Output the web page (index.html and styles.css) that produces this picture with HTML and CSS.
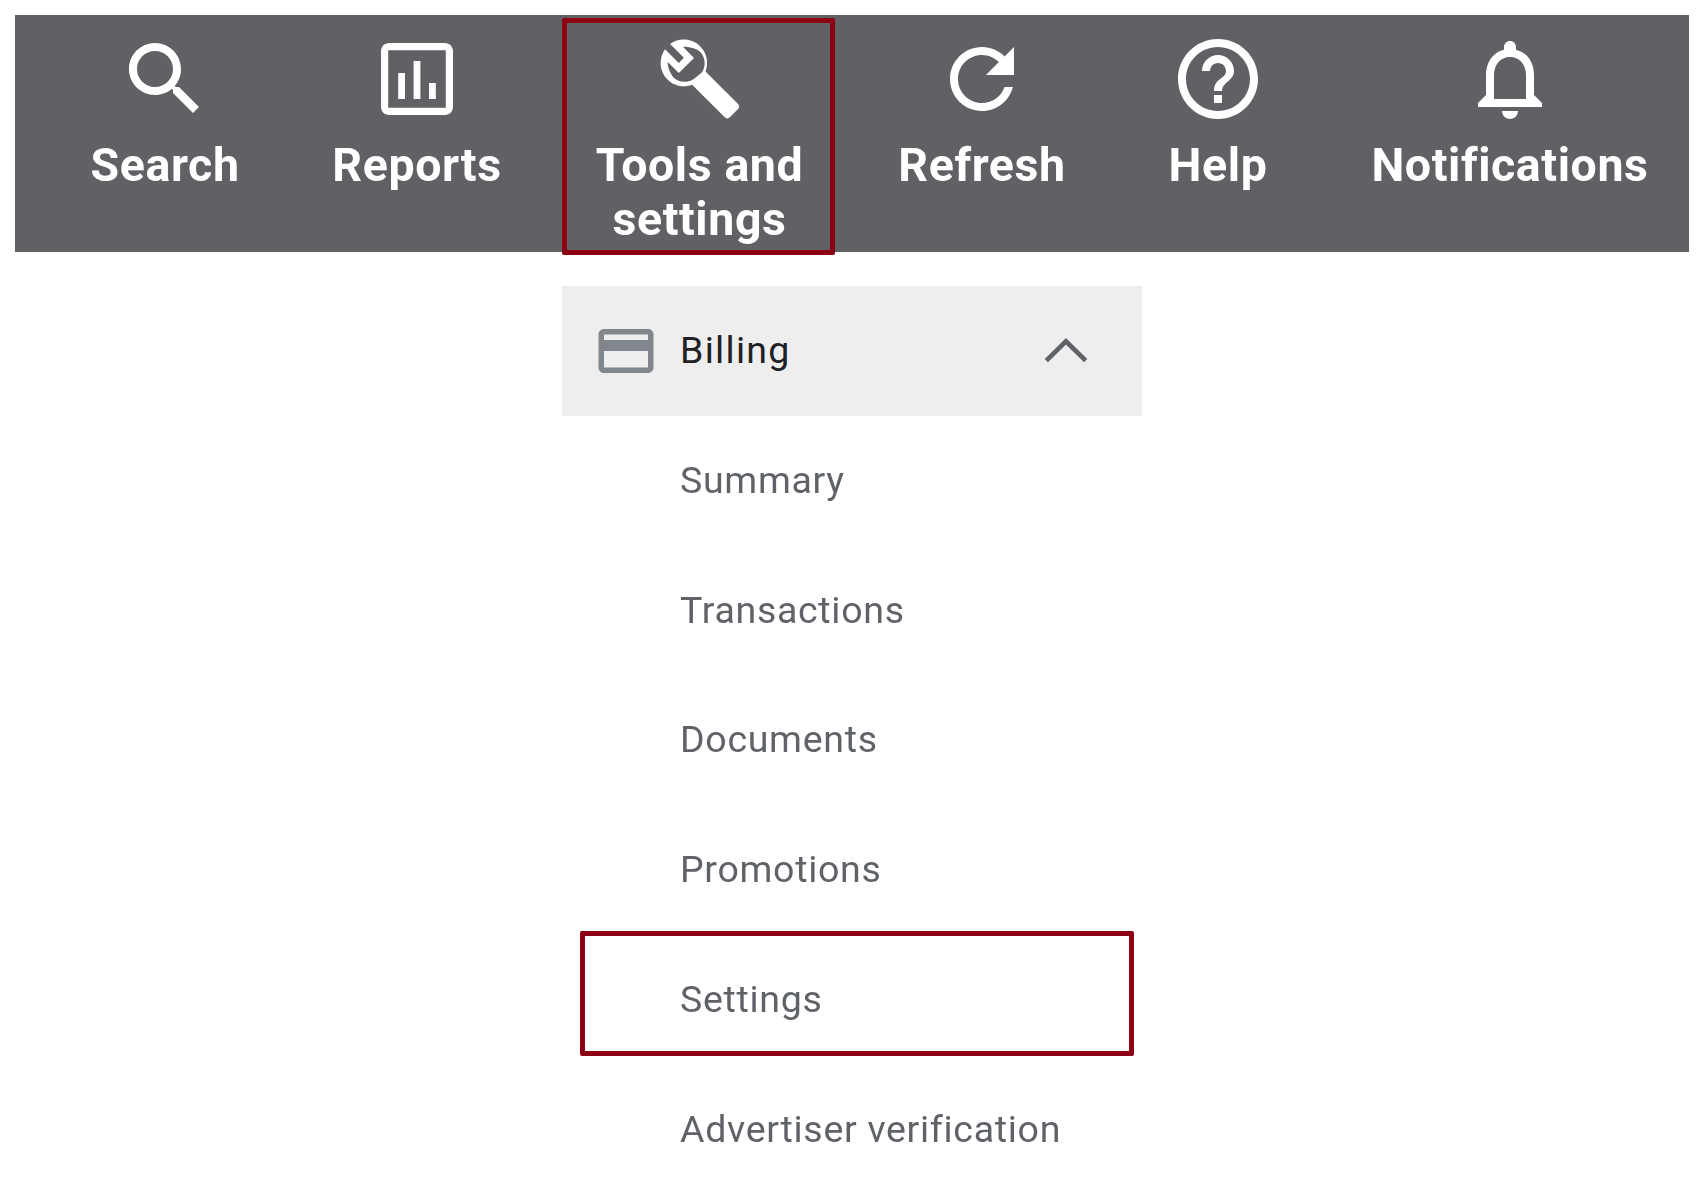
FILE: index.html
```html
<!DOCTYPE html>
<html lang="en">
<head>
<meta charset="utf-8">
<title>Billing settings</title>
<link rel="stylesheet" href="styles.css">
</head>
<body>
<nav class="toolbar">
  <div class="tool tool-search">
    <svg class="tool-icon" viewBox="0 0 24 24"><path d="M15.5 14h-.79l-.28-.27C15.41 12.59 16 11.11 16 9.5 16 5.91 13.09 3 9.5 3S3 5.91 3 9.5 5.91 16 9.5 16c1.61 0 3.09-.59 4.23-1.57l.27.28v.79l5 4.99L20.49 19l-4.99-5zm-6 0C7.01 14 5 11.99 5 9.5S7.01 5 9.5 5 14 7.01 14 9.5 11.99 14 9.5 14z"/></svg>
    <span class="tool-label">Search</span>
  </div>
  <div class="tool tool-reports">
    <svg class="tool-icon" viewBox="0 0 24 24"><path d="M19 3H5c-1.100 0-2 .9-2 2v14c0 1.100.9 2 2 2h14c1.100 0 2-.9 2-2V5c0-1.100-.9-2-2-2zm.2 16.200H4.800V4.800h14.400zM9 17H7.300v-6.500H9zM12.850 17h-1.700V7.500h1.700zM16.700 17H15v-4h1.700z" fill-rule="evenodd"/></svg>
    <span class="tool-label">Reports</span>
  </div>
  <div class="tool tool-settings">
    <svg class="tool-icon wrench" viewBox="0 0 24 24"><path d="M22.61 18.99l-9.08-9.08c.93-2.34.45-5.1-1.44-7C9.79.61 6.21.4 3.66 2.25L7.5 6.1 6.08 7.51 2.25 3.69C.39 6.23.61 9.82 2.91 12.11c1.86 1.86 4.57 2.35 6.89 1.48l9.11 9.11c.39.39 1.02.39 1.41 0l2.3-2.3c.4-.38.4-1.01-.01-1.41zM12 4.4c1.08 1.08 1.49 2.57 1.24 3.96-.12.71-.42 1.37-.88 1.96l-2 1.6c-.61.45-1.29.72-2 .82-1.36.2-2.79-.21-3.83-1.25C3.37 9.76 2.93 8.5 3 7.26l3.09 3.09 4.24-4.24-3.09-3.09C8.48 2.95 11.05 3.46 12 4.4z"/></svg>
    <span class="tool-label">Tools and settings</span>
    <span class="highlight highlight-tool"></span>
  </div>
  <div class="tool tool-refresh">
    <svg class="tool-icon" viewBox="0 0 24 24"><path d="M17.65 6.35C16.2 4.9 14.21 4 12 4c-4.42 0-7.99 3.58-7.99 8s3.57 8 7.99 8c3.73 0 6.84-2.55 7.73-6h-2.08c-.82 2.33-3.04 4-5.65 4-3.31 0-6-2.69-6-6s2.69-6 6-6c1.66 0 3.14.69 4.22 1.78L13 11h7V4l-2.35 2.35z"/></svg>
    <span class="tool-label">Refresh</span>
  </div>
  <div class="tool tool-help">
    <svg class="tool-icon" viewBox="0 0 24 24"><path d="M11 18h2v-2h-2v2zm1-16C6.48 2 2 6.48 2 12s4.48 10 10 10 10-4.48 10-10S17.52 2 12 2zm0 18c-4.41 0-8-3.59-8-8s3.59-8 8-8 8 3.59 8 8-3.59 8-8 8zm0-14c-2.21 0-4 1.79-4 4h2c0-1.1.9-2 2-2s2 .9 2 2c0 2-3 1.75-3 5h2c0-2.25 3-2.5 3-5 0-2.21-1.79-4-4-4z"/></svg>
    <span class="tool-label">Help</span>
  </div>
  <div class="tool tool-notifications">
    <svg class="tool-icon" viewBox="0 0 24 24"><path d="M12 22c1.1 0 2-.9 2-2h-4c0 1.1.9 2 2 2zm6-6v-5c0-3.07-1.63-5.64-4.5-6.32V4c0-.83-.67-1.5-1.5-1.5s-1.5.67-1.5 1.5v.68C7.64 5.36 6 7.92 6 11v5l-2 2v1h16v-1l-2-2zm-2 1H8v-6c0-2.48 1.51-4.5 4-4.5s4 2.02 4 4.5v6z"/></svg>
    <span class="tool-label">Notifications</span>
  </div>
</nav>

<section class="menu">
  <div class="menu-head">
    <svg class="card-icon" viewBox="0 0 24 24"><path d="M20 4H4c-1.11 0-1.99.89-1.99 2L2 18c0 1.11.89 2 2 2h16c1.11 0 2-.89 2-2V6c0-1.11-.89-2-2-2zm0 14H4v-6h16v6zm0-10H4V6h16v2z"/></svg>
    <span class="menu-title">Billing</span>
    <svg class="chevron" viewBox="0 0 24 24"><path d="M6.500 14.700 12 9.300l5.500 5.400"/></svg>
  </div>
  <ul class="menu-list">
    <li class="menu-item">Summary</li>
    <li class="menu-item">Transactions</li>
    <li class="menu-item">Documents</li>
    <li class="menu-item">Promotions</li>
    <li class="menu-item">Settings<span class="highlight highlight-item"></span></li>
    <li class="menu-item">Advertiser verification</li>
  </ul>
</section>
</body>
</html>
```
FILE: styles.css
```css
* { box-sizing: border-box; }
html, body { margin: 0; height: 1180px; overflow: hidden; background: #fff; }
body { font-family: Roboto, "Liberation Sans", sans-serif; }

.toolbar {
  margin: 15px 15px 0 15px;
  height: 237px;
  background: #5f6165;
  display: flex;
  align-items: flex-start;
  padding: 16px 0 0 76px;
  color: #fff;
  filter: blur(0.5px);
}
.tool {
  position: relative;
  display: flex;
  flex-direction: column;
  align-items: center;
  text-align: center;
}
.tool-icon { width: 96px; height: 96px; fill: #fff; flex: none; }
.wrench { width: 86px; height: 86px; margin: 5px 0 5px; }
.tool-label {
  margin-top: 11px;
  font-size: 46.5px;
  line-height: 54px;
  font-weight: 700;
  letter-spacing: 0.6px;
}
.tool-search { width: 148px; }
.tool-reports { width: 168px; margin-left: 94px; }
.tool-settings { width: 223px; margin-left: 87px; }
.tool-refresh { width: 166px; margin-left: 88px; }
.tool-help { width: 98px; margin-left: 104px; }
.tool-notifications { width: 278px; margin-left: 104px; }

.highlight { position: absolute; border: 5px solid #8b0012; border-radius: 2px; pointer-events: none; }
.highlight-tool { left: -26px; right: -24px; top: -13px; bottom: -9px; }
.highlight-item { left: 18px; width: 554px; top: -4px; height: 125px; }

.menu { margin: 34px 0 0 562px; width: 580px; filter: blur(0.5px); }
.menu-head {
  height: 130px;
  background: #eeeeef;
  display: flex;
  align-items: center;
  padding-left: 31px;
  color: #202124;
}
.card-icon { width: 66px; height: 66px; fill: #80868b; flex: none; }
.menu-title { margin: 0 0 2px 21px; font-size: 37.5px; letter-spacing: 1.3px; }
.chevron { width: 86px; height: 86px; fill: none; stroke: #5f6368; stroke-width: 1.3; margin-left: auto; margin-right: 33px; }

.menu-list { list-style: none; margin: 0; padding: 0; }
.menu-item {
  position: relative;
  height: 129.8px;
  display: flex;
  align-items: center;
  padding: 0 0 2px 118px;
  font-size: 37.5px;
  letter-spacing: 0.7px;
  color: #5f6368;
}
```
